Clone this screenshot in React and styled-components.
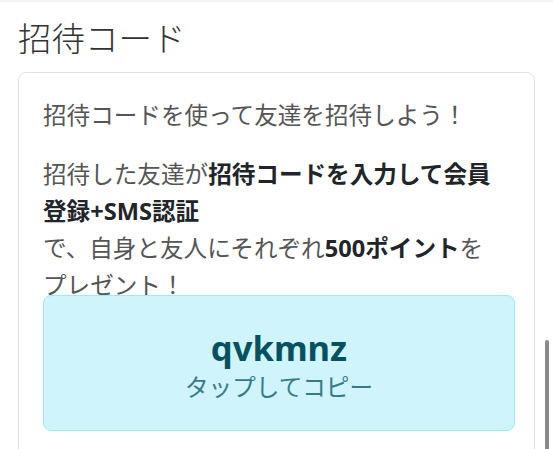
import React from "react";
import styled, { createGlobalStyle } from "styled-components";

const GlobalStyle = createGlobalStyle`
  html, body {
    margin: 0;
    padding: 0;
    background: #ffffff;
    overflow: hidden;
  }
  body {
    font-family: "Noto Sans", "Noto Sans CJK JP", sans-serif;
    -webkit-font-smoothing: antialiased;
  }
`;

const Page = styled.div`
  position: relative;
  height: 449px;
  box-sizing: border-box;
  padding: 0 18px;
  border-top: 2px solid #f3f3f3;
`;

const Title = styled.h2`
  margin: 15px 0 15px;
  font-family: "Noto Sans CJK JP", sans-serif;
  font-size: 33.5px;
  line-height: 40px;
  font-weight: 300;
  color: #333333;
`;

const Card = styled.section`
  box-sizing: border-box;
  min-height: 420px;
  border: 1px solid #dee2e6;
  border-radius: 8px;
  padding: 24px 19px 0 24px;
`;

const Text = styled.p`
  margin: 0 0 ${(p) => p.$gap}px;
  padding-right: 12px;
  font-size: 23.6px;
  line-height: 37px;
  color: #555555;
`;

const Strong = styled.strong`
  font-weight: 700;
  color: #212529;
`;

const CodeBox = styled.button`
  display: flex;
  flex-direction: column;
  align-items: center;
  width: 100%;
  box-sizing: border-box;
  margin-top: -9px;
  padding: 31px 0 25px;
  background: #cff4fc;
  border: 1px solid #9eeaf9;
  border-radius: 8px;
  font-family: inherit;
  cursor: pointer;
`;

const Code = styled.span`
  font-size: 34.6px;
  line-height: 42px;
  font-weight: 700;
  color: #055160;
`;

const Hint = styled.span`
  font-size: 23.6px;
  line-height: 36px;
  color: #377a87;
`;

const ScrollThumb = styled.div`
  position: absolute;
  right: 4px;
  top: 338px;
  width: 4px;
  height: 130px;
  border-radius: 2px;
  background: #8a8a8a;
`;

export default function App() {
  return (
    <>
      <GlobalStyle />
      <Page>
        <Title>招待コード</Title>
        <Card>
          <Text $gap={22}>招待コードを使って友達を招待しよう！</Text>
          <Text $gap={0}>
            招待した友達が<Strong>招待コードを入力して会員登録+SMS認証</Strong>
            <br />
            で、自身と友人にそれぞれ<Strong>500ポイント</Strong>をプレゼント！
          </Text>
          <CodeBox type="button">
            <Code>qvkmnz</Code>
            <Hint>タップしてコピー</Hint>
          </CodeBox>
        </Card>
        <ScrollThumb />
      </Page>
    </>
  );
}
